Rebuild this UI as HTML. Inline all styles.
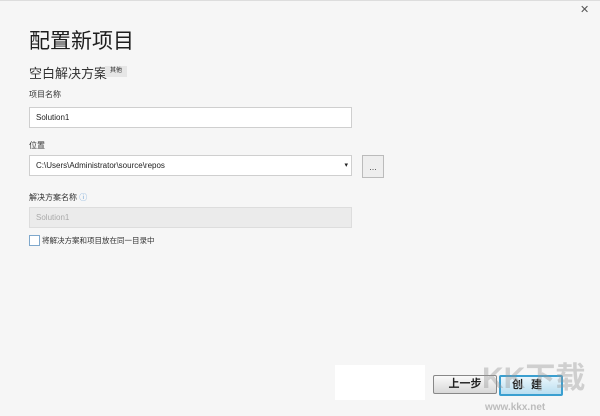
<html style="width:600px;height:416px;overflow:hidden"><head><style>
body{margin:0;width:600px;height:416px;background:#f6f6f6;font-family:"Liberation Sans","Noto Sans CJK SC",sans-serif;position:relative;overflow:hidden;color:#222}
.a{position:absolute;white-space:nowrap}
.inp{position:absolute;left:29px;height:19px;border:1px solid #cfcfcf;background:#fff;font-size:8px;line-height:19px;padding-left:6px;box-sizing:content-box}
.lbl{position:absolute;left:29px;font-size:8px;color:#333;white-space:nowrap}
</style></head><body>
<div class="a" style="left:0;top:0;width:600px;height:1px;background:#ddd"></div>
<div class="a" style="left:580px;top:3px;font-size:11px;color:#555">✕</div>
<div class="a" style="left:29px;top:25px;font-size:21px;color:#1e1e1e">配置新项目</div>
<div class="a" style="left:29px;top:63px;font-size:13px;color:#333">空白解决方案</div>
<div class="a" style="left:105px;top:66px;width:22px;height:11px;background:#e6e6e6;font-size:6px;line-height:11px;text-align:center">其他</div>
<div class="lbl" style="top:89px">项目名称</div>
<div class="inp" style="top:107px;width:315px">Solution1</div>
<div class="lbl" style="top:140px">位置</div>
<div class="inp" style="top:155px;width:315px">C:\Users\Administrator\source\repos<span style="position:absolute;right:3px;font-size:7px">▾</span></div>
<div class="a" style="left:362px;top:155px;width:20px;height:21px;border:1px solid #bbb;background:#eee;font-size:8px;text-align:center;line-height:24px">…</div>
<div class="lbl" style="top:192px">解决方案名称 <span style="color:#6fa3d6">ⓘ</span></div>
<div class="inp" style="top:207px;width:315px;background:#ebebeb;color:#aaa;border-color:#ddd">Solution1</div>
<div class="a" style="left:29px;top:235px;width:9px;height:9px;border:1px solid #7fa8cc;background:#fff"></div>
<div class="a" style="left:42px;top:235px;font-size:7.5px;color:#333">将解决方案和项目放在同一目录中</div>
<div class="a" style="left:335px;top:365px;width:90px;height:35px;background:#fff"></div>
<div class="a" style="left:433px;top:375px;width:62px;height:17px;border:1px solid #888;border-radius:2px;background:linear-gradient(#fafafa,#d8d8d8);font-size:11px;font-weight:bold;text-align:center;line-height:17px">上一步</div>
<div class="a" style="left:499px;top:375px;width:60px;height:17px;border:2px solid #3a9fd0;border-radius:2px;background:linear-gradient(#eaf6fc,#b9def0);font-size:11px;font-weight:bold;text-align:center;line-height:17px;letter-spacing:8px">创建</div>
<div class="a" style="left:482px;top:362px;font-size:30px;line-height:34px;color:rgba(150,150,150,0.4);font-weight:bold">KK下载</div>
<div class="a" style="left:485px;top:402px;font-size:10px;color:rgba(150,150,150,0.6);font-weight:bold">www.kkx.net</div>
</body></html>
